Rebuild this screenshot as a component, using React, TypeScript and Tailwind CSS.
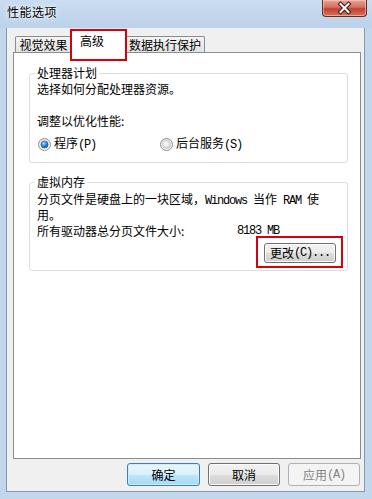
import React from "react";

const M = ({ children }: { children: React.ReactNode }) => (
  <span className="font-['Liberation_Mono',monospace] text-[12px] tracking-[-1.2px]">{children}</span>
);

function Radio({ checked }: { checked?: boolean }) {
  return (
    <svg width="13" height="13" viewBox="0 0 13 13" className="shrink-0">
      <defs>
        <radialGradient id={checked ? "rb" : "rg"} cx="0.4" cy="0.35" r="0.7">
          {checked ? (
            <>
              <stop offset="0" stopColor="#b9e3ff" />
              <stop offset="0.5" stopColor="#2f86d8" />
              <stop offset="1" stopColor="#164f96" />
            </>
          ) : (
            <>
              <stop offset="0" stopColor="#ffffff" />
              <stop offset="1" stopColor="#cfd3d6" />
            </>
          )}
        </radialGradient>
        <linearGradient id="ro" x1="0" y1="0" x2="0" y2="1">
          <stop offset="0" stopColor="#e6e6e6" />
          <stop offset="1" stopColor="#f8f8f8" />
        </linearGradient>
      </defs>
      <circle cx="6.5" cy="6.5" r="6" fill="url(#ro)" stroke="#8f8f8f" strokeWidth="1" />
      <circle cx="6.5" cy="6.5" r={checked ? 3.6 : 4} fill={checked ? "url(#rb)" : "url(#rg)"} stroke={checked ? "#2c5d92" : "#b5b9bd"} strokeWidth="0.6" />
    </svg>
  );
}

const btnNormal =
  "h-[23px] w-[72px] rounded-[3px] border border-[#707070] bg-[linear-gradient(to_bottom,#f2f2f2_0%,#ebebeb_50%,#dddddd_51%,#cfcfcf_100%)] shadow-[inset_0_0_0_1px_#fcfcfc] flex items-center justify-center text-[12px] text-black";

export default function App() {
  return (
    <div className="relative w-[372px] h-[499px] overflow-hidden bg-[#c2d6ec] font-['Noto_Sans_CJK_SC',sans-serif] text-black">
      {/* Title bar */}
      <div className="relative h-[28px] bg-linear-to-b from-[#cadcf0] to-[#bcd2ea]">
        <div className="pl-[7px] pt-[4px] text-[12px] leading-[16px] tracking-[0.5px] text-black [text-shadow:0_0_6px_#ffffff,0_0_3px_#ffffff]">
          性能选项
        </div>
        <div className="absolute left-[322px] top-0 w-[45px] h-[17px] rounded-b-[4px] border border-t-0 border-[#6b2a22] bg-[linear-gradient(to_bottom,#e7a597_0%,#d0705f_45%,#c2402e_55%,#d8735f_100%)] shadow-[inset_0_0_0_1px_rgba(255,220,210,0.5)]">
          <svg width="43" height="16" viewBox="0 0 43 16" className="absolute left-0 top-0">
            <path d="M17.5 4 L25.5 12 M25.5 4 L17.5 12" stroke="#43150f" strokeWidth="4" strokeLinecap="square" />
            <path d="M17.5 4 L25.5 12 M25.5 4 L17.5 12" stroke="#ffffff" strokeWidth="2" strokeLinecap="square" />
          </svg>
        </div>
      </div>

      {/* Client area */}
      <div className="ml-[6px] w-[359px] h-[464px] border border-t-0 border-[#8397b1] bg-[#f0f0f0] flex flex-col">
        {/* Tabs */}
        <div className="relative z-10 h-[24px] flex items-end pl-[8px]">
          <div className="w-[57px] h-[16px] border border-b-0 border-[#898c95] rounded-t-[2px] bg-linear-to-b from-[#f4f4f4] to-[#e3e3e3] text-[12px] leading-[15px] text-center">
            视觉效果
          </div>
          <div className="ml-[-1px] w-[55px] h-[23px] -mb-[1px] border border-b-0 border-[#898c95] rounded-t-[2px] bg-white text-[12px] leading-[16px] pl-[8px] pt-[2px]">
            高级
          </div>
          <div className="ml-[-1px] w-[80px] h-[16px] border border-b-0 border-[#898c95] rounded-t-[2px] bg-linear-to-b from-[#f4f4f4] to-[#e3e3e3] text-[12px] leading-[15px] text-center">
            数据执行保护
          </div>
        </div>

        {/* Panel */}
        <div className="ml-[6px] w-[348px] h-[407px] border border-[#898c95] bg-white pl-[15px] pr-[12px] pt-[13px]">
          <fieldset className="border border-[#d5dfe5] rounded-[3px] px-[7px] pb-[10px]">
            <legend className="px-[2px] ml-[-2px] text-[12px] leading-[14px]">处理器计划</legend>
            <div className="mt-[2px] text-[12px] leading-[14px] whitespace-nowrap">选择如何分配处理器资源。</div>
            <div className="mt-[18px] text-[12px] leading-[14px] whitespace-nowrap">调整以优化性能:</div>
            <div className="mt-[8px] flex items-center text-[12px] leading-[14px] whitespace-nowrap">
              <div className="w-[123px] flex items-center gap-[3px] pl-[1px]">
                <Radio checked />
                <span>
                  程序<M>(P)</M>
                </span>
              </div>
              <div className="flex items-center gap-[3px]">
                <Radio />
                <span>
                  后台服务<M>(S)</M>
                </span>
              </div>
            </div>
          </fieldset>

          <fieldset className="mt-[12px] border border-[#d5dfe5] rounded-[3px] px-[7px] pr-[11px] pb-[7px]">
            <legend className="px-[2px] ml-[-2px] text-[12px] leading-[14px]">虚拟内存</legend>
            <div className="mt-[3px] text-[12px] leading-[13px] whitespace-nowrap">
              分页文件是硬盘上的一块区域，<M>Windows </M>当作<M> RAM </M>使
              <br />
              用。
            </div>
            <div className="mt-[3px] flex text-[12px] leading-[14px] whitespace-nowrap">
              <span className="w-[200px]">所有驱动器总分页文件大小:</span>
              <M>8183 MB</M>
            </div>
            <div className="mt-[5px] flex justify-end">
              <div className="h-[20px] w-[72px] rounded-[3px] border border-[#707070] bg-[linear-gradient(to_bottom,#f2f2f2_0%,#ebebeb_50%,#dddddd_51%,#cfcfcf_100%)] shadow-[inset_0_0_0_1px_#fcfcfc] flex items-center justify-center text-[12px] leading-[14px]">
                更改<M>(C)...</M>
              </div>
            </div>
          </fieldset>
        </div>

        {/* Buttons */}
        <div className="mt-[4px] flex justify-end gap-[8px] pr-[4px]">
          <div className="h-[23px] w-[73px] rounded-[3px] border border-[#3c7fb1] bg-[linear-gradient(to_bottom,#eaf6fd_0%,#d9f0fc_50%,#bee6fd_51%,#a7d9f5_100%)] shadow-[inset_0_0_0_1px_#c9eefc] flex items-center justify-center text-[12px]">
            确定
          </div>
          <div className={btnNormal}>取消</div>
          <div className="h-[23px] w-[72px] rounded-[3px] border border-[#adb2b5] bg-[#f4f4f4] flex items-center justify-center text-[12px] text-[#838383]">
            应用<M>(A)</M>
          </div>
        </div>
      </div>

      {/* Red annotation boxes */}
      <div className="absolute left-[70px] top-[29px] w-[57px] h-[32px] border-2 border-[#d7000f] z-20 pointer-events-none" />
      <div className="absolute left-[256px] top-[236px] w-[87px] h-[32px] border-2 border-[#d7000f] z-20 pointer-events-none" />
    </div>
  );
}
